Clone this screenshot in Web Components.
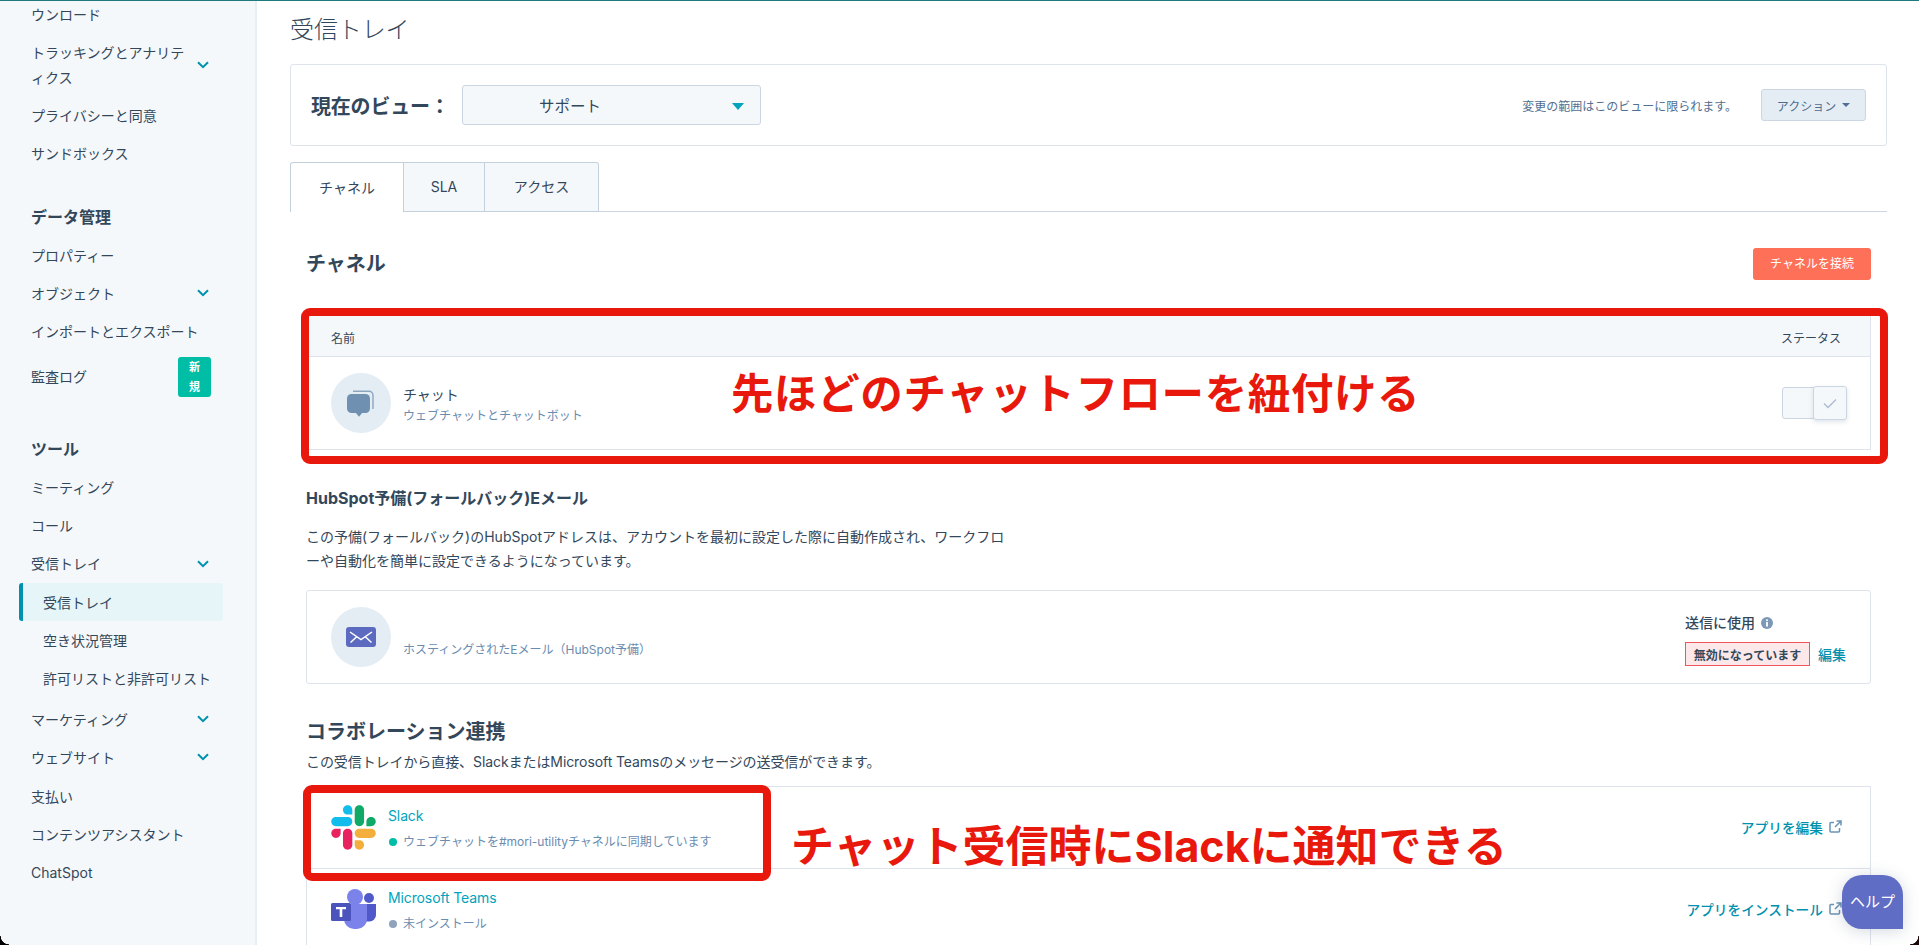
<!DOCTYPE html>
<html lang="ja"><head><meta charset="utf-8"><title>受信トレイ</title>
<style>
html,body{margin:0;height:945px;overflow:hidden;background:#fff}
body{font-family:Inter,"Noto Sans CJK JP",sans-serif;color:#33475b;font-size:14px}
</style></head><body>
<x-app>
  <x-sidebar slot="side">
    <x-side-item style="margin-top:-6px">ウンロード</x-side-item>
    <x-side-item two chevron>トラッキングとアナリティクス</x-side-item>
    <x-side-item>プライバシーと同意</x-side-item>
    <x-side-item>サンドボックス</x-side-item>
    <x-side-head style="margin-top:24px">データ管理</x-side-head>
    <x-side-item>プロパティー</x-side-item>
    <x-side-item chevron>オブジェクト</x-side-item>
    <x-side-item>インポートとエクスポート</x-side-item>
    <x-side-item badge="新規" style="height:53px">監査ログ</x-side-item>
    <x-side-head style="margin-top:25px">ツール</x-side-head>
    <x-side-item>ミーティング</x-side-item>
    <x-side-item>コール</x-side-item>
    <x-side-item chevron style="height:39px">受信トレイ</x-side-item>
    <x-side-item sub active>受信トレイ</x-side-item>
    <x-side-item sub>空き状況管理</x-side-item>
    <x-side-item sub>許可リストと非許可リスト</x-side-item>
    <x-side-item chevron style="margin-top:3px">マーケティング</x-side-item>
    <x-side-item chevron>ウェブサイト</x-side-item>
    <x-side-item style="margin-top:1px">支払い</x-side-item>
    <x-side-item>コンテンツアシスタント</x-side-item>
    <x-side-item>ChatSpot</x-side-item>
  </x-sidebar>
  <x-main>
    <x-page-title>受信トレイ</x-page-title>
    <x-view-bar label="現在のビュー：" value="サポート" note="変更の範囲はこのビューに限られます。" action="アクション"></x-view-bar>
    <x-tabs>
      <x-tab active style="width:114px">チャネル</x-tab>
      <x-tab style="width:81px">SLA</x-tab>
      <x-tab last style="width:114px">アクセス</x-tab>
    </x-tabs>
    <x-content>
      <x-panel-head button="チャネルを接続">チャネル</x-panel-head>
      <x-frame style="margin-top:35px">
        <x-table-head status="ステータス">名前</x-table-head>
        <x-row style="height:92px;padding-top:16px">
          <x-avatar><svg width="30" height="28" viewBox="0 0 30 28"><rect x="1" y="5" width="23" height="19" rx="4.5" fill="#6f90b0"/><path d="M9.500 23.500h7l-3.500 4.200z" fill="#6f90b0"/><path d="M7 2.200h16a4 4 0 0 1 4 4V20" fill="none" stroke="#8ba5bf" stroke-width="1.400"/></svg></x-avatar>
          <x-stack style="margin-top:11px">
            <x-line>チャット</x-line>
            <x-line small muted>ウェブチャットとチャットボット</x-line>
          </x-stack>
          <x-toggle></x-toggle>
        </x-row>
      </x-frame>
      <x-h2 style="margin-top:36px;font-size:16px;line-height:24px">HubSpot予備(フォールバック)Eメール</x-h2>
      <x-para style="margin-top:15px;line-height:24px">この予備(フォールバック)のHubSpotアドレスは、アカウントを最初に設定した際に自動作成され、ワークフロ<br>ーや自動化を簡単に設定できるようになっています。</x-para>
      <x-frame box style="margin-top:17px">
        <x-row style="height:92px;padding-top:16px">
          <x-avatar><svg width="30" height="20" viewBox="0 0 30 20"><rect width="30" height="20" rx="3" fill="#5c6bc0"/><path d="M4 5l11 7.500L26 5M4.500 15.500l6.500-6M25.500 15.500l-6.500-6" fill="none" stroke="#fff" stroke-width="1.500"/></svg></x-avatar>
          <x-stack style="margin-top:32px"><x-line small muted>ホスティングされたEメール（HubSpot予備）</x-line></x-stack>
          <x-send-block label="送信に使用" state="無効になっています" edit="編集"></x-send-block>
        </x-row>
      </x-frame>
      <x-h2 style="margin-top:32px;font-size:20px;line-height:32px">コラボレーション連携</x-h2>
      <x-para style="margin-top:2px;line-height:24px;letter-spacing:-.08px">この受信トレイから直接、SlackまたはMicrosoft Teamsのメッセージの送受信ができます。</x-para>
      <x-frame style="margin-top:12px;border-top:1px solid #dfe3eb">
        <x-app-row name="Slack" status="ウェブチャットを#mori-utilityチャネルに同期しています" dot="#00bda5" link="アプリを編集" icon-top="-1">
          <svg slot="icon" width="45" height="45" viewBox="0 0 127 127"><path d="M27.200 80c0 7.300-5.900 13.200-13.200 13.200C6.700 93.200.8 87.300.8 80c0-7.300 5.900-13.200 13.200-13.200h13.200V80zm6.600 0c0-7.300 5.900-13.200 13.200-13.200 7.300 0 13.200 5.900 13.200 13.200v33c0 7.300-5.900 13.200-13.200 13.200-7.300 0-13.200-5.900-13.200-13.200V80z" fill="#E8225F"/><path d="M47 27c-7.300 0-13.200-5.900-13.200-13.200C33.800 6.500 39.700.6 47 .6c7.300 0 13.200 5.900 13.200 13.200V27H47zm0 6.700c7.300 0 13.200 5.900 13.200 13.200 0 7.300-5.900 13.200-13.200 13.200H13.900C6.600 60.100.7 54.200.7 46.900c0-7.300 5.900-13.200 13.200-13.200H47z" fill="#12BDEB"/><path d="M99.900 46.900c0-7.300 5.900-13.200 13.200-13.200 7.300 0 13.200 5.900 13.200 13.200 0 7.300-5.900 13.200-13.200 13.200H99.900V46.900zm-6.600 0c0 7.300-5.900 13.200-13.200 13.200-7.300 0-13.200-5.900-13.200-13.200V13.800C66.900 6.500 72.800.6 80.100.6c7.300 0 13.200 5.900 13.200 13.200v33.100z" fill="#0FA968"/><path d="M80.100 99.800c7.300 0 13.200 5.900 13.200 13.200 0 7.300-5.900 13.200-13.200 13.200-7.300 0-13.200-5.900-13.200-13.200V99.800h13.200zm0-6.600c-7.300 0-13.200-5.900-13.200-13.200 0-7.300 5.900-13.200 13.200-13.200h33.100c7.300 0 13.200 5.900 13.200 13.200 0 7.300-5.900 13.200-13.200 13.200H80.100z" fill="#F3AE3D"/></svg>
        </x-app-row>
        <x-app-row name="Microsoft Teams" status="未インストール" dot="#8fa3ba" link="アプリをインストール" icon-top="1" last>
          <svg slot="icon" width="45" height="40" viewBox="0 0 45 40"><circle cx="38" cy="9" r="5" fill="#5059c9"/><path d="M31 15h14v11a6.500 6.500 0 0 1-6.500 6.500H31z" fill="#5059c9"/><circle cx="24" cy="8" r="8" fill="#7b83eb"/><path d="M13 15h23v15a10 10 0 0 1-10 10h-3a10 10 0 0 1-10-10z" fill="#7b83eb"/><rect y="14" width="20" height="18" rx="1.500" fill="#4b53bc"/><path d="M5 18h10v2.200h-3.700V28H8.700v-7.800H5z" fill="#fff"/></svg>
        </x-app-row>
      </x-frame>
    </x-content>
  </x-main>
  <x-annot-box style="left:301px;top:307px;width:1587px;height:156px"></x-annot-box>
  <x-annot-box style="left:303px;top:784px;width:468px;height:96px"></x-annot-box>
  <x-annot-text style="left:731px;top:368px;font-size:42.500px;letter-spacing:.6px">先ほどのチャットフローを紐付ける</x-annot-text>
  <x-annot-text style="left:791px;top:820px;font-size:43px">チャット受信時にSlackに通知できる</x-annot-text>
  <x-help>ヘルプ</x-help>
  <x-corner style="left:0;bottom:0;background:radial-gradient(circle at 100% 0,transparent 8px,#000 8.600px)"></x-corner>
  <x-corner style="right:0;bottom:0;background:radial-gradient(circle at 0 0,transparent 8px,#1c0707 8.600px)"></x-corner>
</x-app>
<script>
const el=(name,css,html)=>{
  customElements.define(name,class extends HTMLElement{
    constructor(){super();const r=this.attachShadow({mode:'open'});
      r.innerHTML=`<style>${css}</style>`+(typeof html==='function'?'':html||'<slot></slot>');}
    connectedCallback(){ if(typeof html==='function'){const t=document.createElement('template');t.innerHTML=html(this);this.shadowRoot.append(t.content);} }
  });
};
const chev=`<svg width="12" height="8" viewBox="0 0 12 8" style="flex:none;margin-left:auto"><path d="M1 1.200l5 5 5-5" fill="none" stroke="#0091ae" stroke-width="2"/></svg>`;
const ext=`<svg width="13" height="13" viewBox="0 0 13 13" style="flex:none"><path d="M10.500 8v3a1 1 0 0 1-1 1h-7.500a1 1 0 0 1-1-1V3.500a1 1 0 0 1 1-1h3M7.500 1h4.500v4.500M12 1L6 7" fill="none" stroke="#6a93b5" stroke-width="1.500"/></svg>`;

el('x-app',`:host{display:grid;grid-template-columns:257px 1fr;height:944px;position:relative;border-top:1px solid #1f7a80;overflow:hidden}`,`<slot name="side"></slot><slot></slot>`);
el('x-sidebar',`:host{display:flex;flex-direction:column;background:#f5f8fa;border-right:2px solid #e9eef3;overflow:hidden;height:944px;box-sizing:border-box}`);
el('x-side-item',`:host{display:flex;align-items:center;height:38px;flex:none;padding:0 48px 0 31px;box-sizing:border-box;line-height:25px;width:257px}
 :host([two]){height:63px}
 :host([two]) span{width:154px;flex:none;line-break:anywhere}
 :host([sub]){padding-left:43px}
 :host([active]){margin-left:19px;width:204px;padding-left:20px;border-left:4px solid #0091ae;background:#e5f5f8;border-radius:3px}
 span{white-space:nowrap}
 :host([two]) span{white-space:normal}
 b{margin-left:auto;margin-right:-2px;flex:none;width:33px;height:40px;border-radius:3px;background:#00bda5;color:#fff;font-size:11px;font-weight:700;line-height:20px;text-align:center;display:block;padding:0 10px;box-sizing:border-box}`,
 h=>`<span><slot></slot></span>${h.hasAttribute('chevron')?chev:''}${h.getAttribute('badge')?`<b>${h.getAttribute('badge')}</b>`:''}`);
el('x-side-head',`:host{display:flex;align-items:center;height:40px;flex:none;padding-left:31px;font-size:16px;font-weight:700}`);
el('x-main',`:host{display:block;padding:0 32px 0 33px;height:944px;overflow:hidden;box-sizing:border-box}`);
el('x-page-title',`:host{display:block;height:58px;line-height:58px;font-size:24px;font-weight:300;margin-bottom:5px;letter-spacing:-.1px}`);
el('x-view-bar',`:host{display:flex;align-items:center;height:82px;box-sizing:border-box;border:1px solid #dfe3eb;border-radius:3px;padding:0 20px 0 20px;margin-bottom:16px}
 b{font-size:20px;font-weight:700;width:151px;flex:none;white-space:nowrap;letter-spacing:-.2px}
 .sel{width:299px;height:40px;box-sizing:border-box;border:1px solid #cbd6e2;border-radius:3px;background:#f5f8fa;display:flex;align-items:center;padding-left:76px;font-size:15.500px;position:relative}
 .sel i{position:absolute;right:16px;top:17px;border:6px solid transparent;border-top:7px solid #00a4bd;border-bottom:0}
 .note{margin-left:auto;margin-right:24px;font-size:12px;color:#516f90;white-space:nowrap}
 .act{width:105px;height:32px;box-sizing:border-box;border:1px solid #cbd6e2;border-radius:3px;background:#e5edf4;color:#506e91;font-size:12px;display:flex;align-items:center;justify-content:center;gap:6px;white-space:nowrap}
 .act i{border:4px solid transparent;border-top:4.500px solid #506e91;border-bottom:0}`,
 h=>`<b>${h.getAttribute('label')}</b><div class="sel">${h.getAttribute('value')}<i></i></div><div class="note">${h.getAttribute('note')}</div><div class="act">${h.getAttribute('action')}<i></i></div>`);
el('x-tabs',`:host{display:flex;height:50px;box-sizing:border-box;border-bottom:1px solid #cbd6e2}`);
el('x-tab',`:host{display:flex;align-items:center;justify-content:center;box-sizing:border-box;height:50px;background:#f5f8fa;border:1px solid #c3d1df;border-left:0;flex:none;padding-bottom:2px}
 :host([active]){background:#fff;border-left:1px solid #c3d1df;border-bottom:0;border-radius:3px 0 0 0}
 :host([last]){border-radius:0 3px 0 0}`);
el('x-content',`:host{display:block;padding:35px 16px 0}`);
el('x-panel-head',`:host{display:flex;align-items:center;justify-content:space-between;height:32px;margin-top:1px;font-size:20px;font-weight:700;line-height:30px}
 button{all:unset;box-sizing:border-box;width:118px;height:32px;background:#ff7059;color:#fff;border-radius:3px;font:400 12px Inter,"Noto Sans CJK JP",sans-serif;text-align:center;line-height:32px}`,
 h=>`<span><slot></slot></span><button>${h.getAttribute('button')}</button>`);
el('x-frame',`:host{display:block;border:1px solid #dfe3eb;border-top:0}
 :host([box]){border-top:1px solid #dfe3eb;border-radius:3px}`);
el('x-table-head',`:host{display:flex;justify-content:space-between;align-items:center;height:42px;box-sizing:border-box;padding:3px 29px 0 24px;background:#f5f8fa;border-bottom:1px solid #dfe3eb;font-size:12px}`,
 h=>`<span><slot></slot></span><span>${h.getAttribute('status')}</span>`);
el('x-row',`:host{display:flex;align-items:flex-start;padding:0 23px 0 24px;box-sizing:border-box}`);
el('x-avatar',`:host{display:flex;width:60px;height:60px;border-radius:50%;background:#e5edf4;align-items:center;justify-content:center;flex:none;margin-right:12px}`);
el('x-stack',`:host{display:flex;flex-direction:column;flex:1}`);
el('x-line',`:host{display:block;line-height:21px;font-size:14px}
 :host([small]){font-size:12px}
 :host([muted]){color:#6a8cb0}`);
el('x-toggle',`:host{display:block;position:relative;width:65px;height:32px;margin-top:14px;flex:none}
 .t{position:absolute;inset:0 1px 0 0;border:1px solid #cbd6e2;border-radius:3px;background:#f5f8fa;box-sizing:border-box}
 .k{position:absolute;right:0;top:-1px;width:34px;height:34px;box-sizing:border-box;border:1px solid #cbd6e2;border-radius:3px;background:#f5f8fa;box-shadow:0 2px 5px rgba(80,110,140,.18);display:flex;align-items:center;justify-content:center}`,
 `<div class="t"></div><div class="k"><svg width="14" height="11" viewBox="0 0 14 11"><path d="M1 5.500l4 4 8-8" fill="none" stroke="#a9bcd0" stroke-width="1.300"/></svg></div>`);
el('x-send-block',`:host{display:block;flex:none;width:162px;margin-top:4px}
 .l{display:flex;align-items:center;gap:6px;font-weight:500;line-height:24px}
 .s{display:flex;align-items:center;gap:8px;margin-top:7px}
 .b{width:125px;height:24px;box-sizing:border-box;border:1px solid #f2545b;background:#fde8e9;font-size:12px;font-weight:700;display:flex;align-items:center;justify-content:center;white-space:nowrap}
 a{color:#0091ae;font-weight:500}`,
 h=>`<div class="l">${h.getAttribute('label')}<svg width="12" height="12" viewBox="0 0 12 12"><circle cx="6" cy="6" r="6" fill="#7c98b6"/><rect x="5.100" y="5" width="1.800" height="4.600" fill="#fff"/><rect x="5.100" y="2.400" width="1.800" height="1.700" fill="#fff"/></svg></div><div class="s"><div class="b">${h.getAttribute('state')}</div><a>${h.getAttribute('edit')}</a></div>`);
el('x-h2',`:host{display:block;font-weight:700}`);
el('x-para',`:host{display:block;white-space:nowrap}`);
el('x-app-row',`:host{display:flex;align-items:flex-start;height:82px;box-sizing:border-box;padding:19px 28px 0 24px;border-bottom:1px solid #dfe3eb}
 :host([last]){border-bottom:0}
 .i{width:45px;flex:none;margin-right:12px}
 .t{flex:1}
 .n{color:#00a4bd;line-height:20px;letter-spacing:-.12px}
 .s{color:#6a8cb0;font-size:12px;line-height:20px;margin-top:6px;display:flex;align-items:center}
 .s i{width:8px;height:8px;border-radius:50%;margin:0 6px 0 1px;flex:none}
 .a{color:#0091ae;font-size:13.700px;font-weight:500;display:flex;align-items:center;gap:6px;height:79px;margin-top:-19px;white-space:nowrap}`,
 h=>`<div class="i" style="margin-top:${h.getAttribute('icon-top')}px"><slot name="icon"></slot></div><div class="t"><div class="n">${h.getAttribute('name')}</div><div class="s"><i style="background:${h.getAttribute('dot')}"></i>${h.getAttribute('status')}</div></div><div class="a">${h.getAttribute('link')}${ext}</div>`);
el('x-annot-box',`:host{position:absolute;box-sizing:border-box;border:8px solid #e8190c;border-radius:9px;pointer-events:none}`);
el('x-annot-text',`:host{position:absolute;color:#e8190c;font-weight:700;line-height:50px;white-space:nowrap}`);
el('x-help',`:host{position:absolute;left:1842px;top:874px;width:61px;height:54px;background:#5f6dc4;color:#fff;border-radius:20px 20px 0 20px;display:flex;align-items:center;justify-content:center;padding-bottom:4px;box-sizing:border-box;box-shadow:0 2px 16px rgba(60,80,110,.22);font-size:15px}`);
el('x-corner',`:host{position:absolute;width:9px;height:9px}`);
</script>
</body></html>
